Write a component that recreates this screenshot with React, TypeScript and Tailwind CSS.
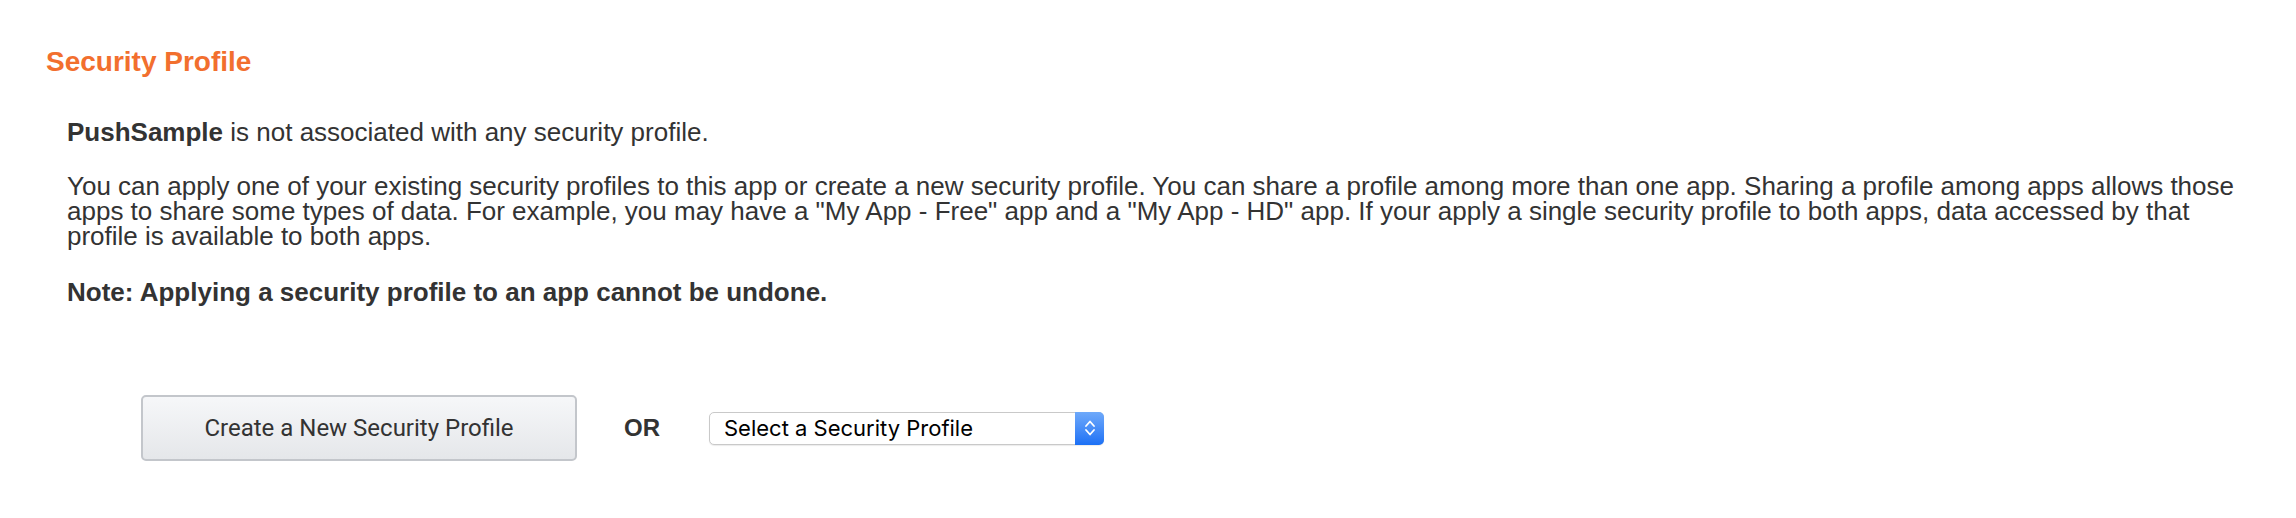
import React from 'react';

const body = '"Liberation Sans", Arial, Helvetica, sans-serif';

function SelectBox() {
  return (
    <div className="flex h-[33px] w-[395px] items-stretch rounded-[5px] border border-[#c9c9c9] bg-white shadow-[0_1px_1px_rgba(0,0,0,0.08)]">
      <span
        className="flex flex-1 items-center pl-[14px] text-[22px] text-black"
        style={{ fontFamily: 'Inter, "Noto Sans", sans-serif' }}
      >
        Select a Security Profile
      </span>
      <span className="-m-px flex w-[29px] items-center justify-center rounded-r-[5px] bg-gradient-to-b from-[#6ea9fa] to-[#1b70f5]">
        <svg width="12" height="18" viewBox="0 0 12 18" fill="none">
          <path d="M2 7l4-4.5L10 7" stroke="white" strokeWidth="1.8" strokeLinecap="round" strokeLinejoin="round" />
          <path d="M2 11l4 4.5L10 11" stroke="white" strokeWidth="1.8" strokeLinecap="round" strokeLinejoin="round" />
        </svg>
      </span>
    </div>
  );
}

export default function App() {
  return (
    <div className="h-[518px] w-full bg-white text-[#333]" style={{ fontFamily: body }}>
      <div className="pl-[46px] pt-[46px]">
        <h2 className="text-[28px] font-bold leading-[32px] text-[#f26f2e]">Security Profile</h2>

        <div className="pl-[21px] pr-[40px] pt-[42px] text-[26px] leading-[25px]">
          <p>
            <b>PushSample</b> is not associated with any security profile.
          </p>
          <p className="mt-[29px]">
            You can apply one of your existing security profiles to this app or create a new security profile. You can
            share a profile among more than one app. Sharing a profile among apps allows those apps to share some types
            of data. For example, you may have a &quot;My App - Free&quot; app and a &quot;My App - HD&quot; app. If
            your apply a single security profile to both apps, data accessed by that profile is available to both apps.
          </p>
          <p className="mt-[31px] font-bold">Note: Applying a security profile to an app cannot be undone.</p>
        </div>

        <div className="mt-[90px] flex items-center pl-[95px]">
          <button
            className="h-[66px] w-[436px] rounded-[5px] border-2 border-[#c3c6cb] bg-gradient-to-b from-[#f6f7f9] to-[#e5e7ea] text-[24px] text-[#333]"
            style={{ fontFamily: 'Roboto, sans-serif' }}
          >
            Create a New Security Profile
          </button>
          <span className="ml-[47px] mr-[49px] text-[24px] font-bold">OR</span>
          <SelectBox />
        </div>
      </div>
    </div>
  );
}
